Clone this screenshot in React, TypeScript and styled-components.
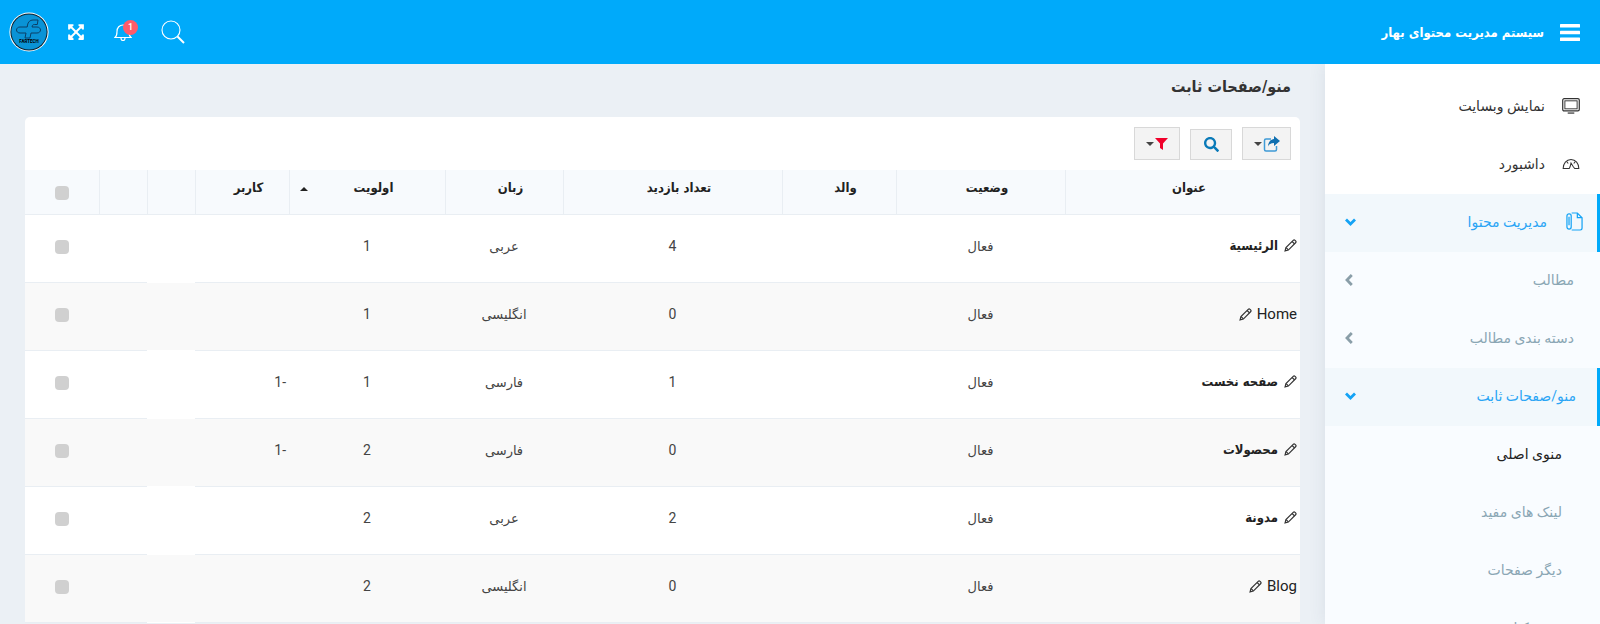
import React from 'react';
import styled, { createGlobalStyle } from 'styled-components';
import { FaExpandArrowsAlt, FaSearch } from 'react-icons/fa';

const boldStack = '"DejaVu Sans Condensed", Roboto, "DejaVu Sans", sans-serif';

const GlobalStyle = createGlobalStyle`
  html, body {
    margin: 0;
    height: 624px;
    overflow: hidden;
    background: #ebf0f5;
    font-family: Roboto, "DejaVu Sans", sans-serif;
  }
`;

const Page = styled.div`
  direction: rtl;
  width: 1600px;
  height: 624px;
  overflow: hidden;
`;

const Header = styled.header`
  height: 64px;
  background: #00aafa;
  display: flex;
  align-items: center;
  color: #fff;
  padding: 0 20px 0 9px;
  box-sizing: border-box;
  position: relative;
  z-index: 1;
`;

const Brand = styled.div`
  display: flex;
  align-items: center;
  gap: 16px;
  font-family: ${boldStack};
  font-size: 13px;
  font-weight: 700;
  flex: 1;
`;

const HeaderTools = styled.div`
  display: flex;
  direction: ltr;
  align-items: center;
`;

const ToolSlot = styled.div<{ $w: number }>`
  width: ${p => p.$w}px;
  display: flex;
  justify-content: center;
  position: relative;
`;

const Badge = styled.span`
  position: absolute;
  top: -2px;
  left: 20px;
  width: 15px;
  height: 15px;
  border-radius: 50%;
  background: #ff5b6a;
  color: #fff;
  font-size: 9px;
  font-weight: 500;
  line-height: 15px;
  text-align: center;
`;

const Body = styled.div`
  display: flex;
  height: 560px;
`;

const Sidebar = styled.aside`
  width: 275px;
  flex: none;
  background: #fff;
  padding-top: 14px;
  overflow: hidden;
  box-shadow: 0 0 16px rgba(60, 80, 110, 0.1);
`;

const NavRow = styled.div<{ $active?: boolean }>`
  height: 58px;
  box-sizing: border-box;
  display: flex;
  align-items: center;
  padding: 0 ${p => (p.$active ? 14 : 17)}px 3px 0;
  gap: ${p => (p.$active ? 19 : 17)}px;
  font-size: 14px;
  color: ${p => (p.$active ? '#2aa5f5' : '#333')};
  background: ${p => (p.$active ? '#f2f8fc' : 'transparent')};
  border-right: 3px solid ${p => (p.$active ? '#00aafa' : 'transparent')};
`;

const SubMenu = styled.div`
  background: #f9fcff;
`;

const SubRow = styled.div<{ $current?: boolean; $indent?: number }>`
  height: 58px;
  box-sizing: border-box;
  display: flex;
  align-items: center;
  padding: 0 ${p => p.$indent ?? 26}px 3px 0;
  font-size: 14px;
  color: ${p => (p.$current ? '#222' : '#8aa6b4')};
`;

const SubOpen = styled(NavRow)`
  padding-right: 21px;
`;

const Arrow = styled.span`
  margin-right: auto;
  margin-left: 20px;
  display: flex;
`;

const Content = styled.main`
  flex: 1;
  padding: 0 25px;
  min-width: 0;
`;

const Title = styled.h1`
  margin: 0;
  height: 53px;
  display: flex;
  align-items: center;
  padding: 0 9px 9px 0;
  box-sizing: border-box;
  font-family: ${boldStack};
  font-size: 16px;
  font-weight: 700;
  color: #333;
`;

const Card = styled.section`
  background: #fff;
  border-radius: 5px 5px 0 0;
`;

const Toolbar = styled.div`
  height: 53px;
  display: flex;
  align-items: flex-start;
  padding: 10px 9px 0 0;
  box-sizing: border-box;
  gap: 10px;
`;

const ToolButton = styled.button<{ $w: number; $h?: number }>`
  width: ${p => p.$w}px;
  height: ${p => p.$h ?? 33}px;
  margin-top: ${p => (p.$h ? 2 : 0)}px;
  padding: 0;
  border: 1px solid #d8d8d8;
  background: #f3f3f3;
  display: flex;
  align-items: center;
  justify-content: center;
  gap: 1px;
`;

const Caret = styled.span`
  width: 0;
  height: 0;
  border-left: 4px solid transparent;
  border-right: 4px solid transparent;
  border-top: 4px solid #444;
`;

const Table = styled.table`
  width: 1275px;
  table-layout: fixed;
  border-collapse: separate;
  border-spacing: 0;
`;

const Th = styled.th`
  height: 45px;
  box-sizing: border-box;
  padding: 0 0 10px 12px;
  background: #f7fafd;
  border-bottom: 1px solid #e9eef3;
  border-left: 1px solid #e9eef3;
  font-family: ${boldStack};
  font-size: 13px;
  font-weight: 700;
  color: #222;
  text-align: center;
  position: relative;
  &:last-child {
    border-left: 0;
    padding: 0;
  }
`;

const Row = styled.tr<{ $alt: boolean }>`
  background: ${p => (p.$alt ? '#f9f9f9' : '#fff')};
`;

const Td = styled.td<{ $blank?: boolean }>`
  height: 68px;
  box-sizing: border-box;
  padding: 0 0 5px;
  border-bottom: 1px solid ${p => (p.$blank ? '#fff' : '#e9eef3')};
  text-align: center;
  font-size: 14px;
  color: #444;
`;

const NameCell = styled(Td)`
  text-align: right;
  padding-right: 3px;
  color: #222;
`;

const NameInner = styled.span<{ $latin: boolean }>`
  display: inline-flex;
  align-items: center;
  flex-direction: ${p => (p.$latin ? 'row-reverse' : 'row')};
  gap: ${p => (p.$latin ? 5 : 6)}px;
  font-family: ${p => (p.$latin ? 'Roboto, sans-serif' : boldStack)};
  font-size: ${p => (p.$latin ? 15 : 13)}px;
  font-weight: ${p => (p.$latin ? 400 : 700)};
`;

const SmallCell = styled(Td)`
  font-size: 13px;
`;

const UserCell = styled(Td)`
  text-align: right;
  padding-right: 3px;
`;

const Check = styled.span`
  display: inline-block;
  width: 14px;
  height: 14px;
  border-radius: 4px;
  background: #d0d0d0;
  vertical-align: middle;
`;

const SortMark = styled.span`
  position: absolute;
  left: 10px;
  top: 17px;
  width: 0;
  height: 0;
  border-left: 4px solid transparent;
  border-right: 4px solid transparent;
  border-bottom: 4px solid #222;
`;

const BarsIcon = () => (
  <svg width="20" height="17" viewBox="0 0 20 17" fill="#fff">
    <rect width="20" height="3.400" rx="0.500" />
    <rect y="6.800" width="20" height="3.400" rx="0.500" />
    <rect y="13.600" width="20" height="3.400" rx="0.500" />
  </svg>
);

const Logo = () => (
  <svg width="40" height="40" viewBox="0 0 40 40">
    <circle cx="20" cy="20" r="19.6" fill="#fff" />
    <circle cx="20" cy="20" r="18.6" fill="#08202f" />
    <circle cx="20" cy="20" r="17.600" fill="#0a93d6" />
    <path
      d="M29 8h-5c-3 0-5 2-5.500 5l-.3 2H11c-2 0-3.500 1.300-3.500 3s1.500 3 3.500 3h6l-1 5h5l1-5h6c2 0 3.500-1.300 3.500-3s-1.500-3-3.500-3h-5l.3-1c.2-1 .8-1.500 2-1.500h3z"
      fill="none"
      stroke="#0a3f66"
      strokeWidth="1"
    />
    <text x="20" y="31" textAnchor="middle" fontSize="4.500" fontWeight="700" fill="#000" fontFamily="Roboto, sans-serif">
      FARTECH
    </text>
  </svg>
);

const BellIcon = () => (
  <svg width="18" height="20" viewBox="0 0 18 20" fill="none" stroke="#fff" strokeWidth="1.200">
    <path d="M1 15.500c1.500-1.200 2-2.500 2-6C3 5.500 5.500 3 9 3s6 2.500 6 6.500c0 3.500.5 4.800 2 6z" />
    <path d="M7 16c0 1.500 1 2.500 2 2.500s2-1 2-2.500" />
  </svg>
);

const ThinSearch = () => (
  <svg width="24" height="24" viewBox="0 0 24 24" fill="none" stroke="#fff">
    <circle cx="10" cy="10" r="9" strokeWidth="1.100" />
    <path d="M16.500 16.500l6.500 6.500" strokeWidth="2" />
  </svg>
);

const MonitorIcon = () => (
  <svg width="18" height="16" viewBox="0 0 19 17" fill="none" stroke="#333">
    <rect x="0.700" y="0.700" width="17.600" height="13" rx="1.500" strokeWidth="1.300" />
    <rect x="3" y="3" width="13" height="8.500" strokeWidth="1" />
    <path d="M6 16h7" strokeWidth="1.300" />
  </svg>
);

const GaugeIcon = () => (
  <svg width="18" height="12" viewBox="0 0 19 13" fill="none" stroke="#333" strokeWidth="1.100">
    <path d="M1 11.500C1 6 4.500 1.500 9.500 1.500S18 6 18 11.500h-4.500L12 9.500l-2.500-4-1 4-1 2z" />
    <path d="M1 11.500h6.500M5 4l1.500 2M14 4l-1.500 2" />
  </svg>
);

const DocIcon = () => (
  <svg width="17" height="19" viewBox="0 0 18 20" fill="none" stroke="#14a3f5" strokeWidth="1.300">
    <path d="M6 1h6l5 5v11c0 1-1 2-2 2H6" />
    <path d="M12 1v5h5" />
    <rect x="1" y="2" width="4.500" height="16" rx="2.200" />
    <path d="M3.200 5v9" />
  </svg>
);

const Pencil = () => (
  <svg width="13" height="13" viewBox="0 0 12 12" fill="none" stroke="#333" strokeWidth="1.100">
    <path d="M1 11l.8-3L8.500 1.300c.5-.5 1.200-.5 1.700 0l.5.5c.5.5.5 1.200 0 1.700L4 10.200z" />
    <path d="M2 8l2 2M7.500 2.300l2.200 2.200" />
  </svg>
);

const ChevronDown = () => (
  <svg width="11" height="8" viewBox="0 0 11 8" fill="none" stroke="#14a3f5" strokeWidth="2.800">
    <path d="M1 1.500l4.500 4.500L10 1.500" />
  </svg>
);

const ChevronLeft = () => (
  <svg width="8" height="12" viewBox="0 0 8 12" fill="none" stroke="#8a9ea8" strokeWidth="2.800">
    <path d="M6.800 1L2 6l4.800 5" />
  </svg>
);

const ShareIcon = () => (
  <svg width="17" height="16" viewBox="0 0 17 16" fill="none">
    <path d="M8 3H3C2 3 1.500 3.500 1.500 4.500v9c0 1 .5 1.500 1.500 1.500h9c1 0 1.500-.5 1.500-1.500V10" stroke="#3f9bd6" strokeWidth="1.500" />
    <path d="M11 0l6 5-6 5V7C8 7 6 8 5 10.500 5 6.500 7.500 3.500 11 3z" fill="#0f6fb0" />
  </svg>
);

const FilterIcon = () => (
  <svg width="13" height="12" viewBox="0 0 13 12" fill="#f0002a">
    <path d="M0 0h13L8 5.500V12L5 10V5.500z" />
  </svg>
);

type PageRow = { name: string; state: string; visits: string; lang: string; order: string; user?: string; latin?: boolean };

const rows: PageRow[] = [
  { name: 'الرئیسیة', state: 'فعال', visits: '4', lang: 'عربی', order: '1' },
  { name: 'Home', state: 'فعال', visits: '0', lang: 'انگلیسی', order: '1', latin: true },
  { name: 'صفحه نخست', state: 'فعال', visits: '1', lang: 'فارسی', order: '1', user: '-1' },
  { name: 'محصولات', state: 'فعال', visits: '0', lang: 'فارسی', order: '2', user: '-1' },
  { name: 'مدونة', state: 'فعال', visits: '2', lang: 'عربی', order: '2' },
  { name: 'Blog', state: 'فعال', visits: '0', lang: 'انگلیسی', order: '2', latin: true },
];

const widths = [235, 169, 114, 219, 118, 156, 94, 48, 48, 74];

export default function App() {
  return (
    <Page>
      <GlobalStyle />
      <Header>
        <Brand>
          <BarsIcon />
          <span>سیستم مدیریت محتوای بهار</span>
        </Brand>
        <HeaderTools>
          <ToolSlot $w={40}><Logo /></ToolSlot>
          <ToolSlot $w={54}><FaExpandArrowsAlt size={18} /></ToolSlot>
          <ToolSlot $w={40}>
            <BellIcon />
            <Badge>1</Badge>
          </ToolSlot>
          <ToolSlot $w={60}><ThinSearch /></ToolSlot>
        </HeaderTools>
      </Header>
      <Body>
        <Sidebar>
          <NavRow><MonitorIcon /><span>نمایش وبسایت</span></NavRow>
          <NavRow><GaugeIcon /><span>داشبورد</span></NavRow>
          <NavRow $active>
            <DocIcon />
            <span>مدیریت محتوا</span>
            <Arrow><ChevronDown /></Arrow>
          </NavRow>
          <SubMenu>
            <SubRow>
              <span>مطالب</span>
              <Arrow><ChevronLeft /></Arrow>
            </SubRow>
            <SubRow>
              <span>دسته بندی مطالب</span>
              <Arrow><ChevronLeft /></Arrow>
            </SubRow>
          </SubMenu>
          <SubOpen $active>
            <span>منو/صفحات ثابت</span>
            <Arrow><ChevronDown /></Arrow>
          </SubOpen>
          <SubMenu>
            <SubRow $current $indent={38}>منوی اصلی</SubRow>
            <SubRow $indent={38}>لینک های مفید</SubRow>
            <SubRow $indent={38}>دیگر صفحات</SubRow>
            <SubRow $indent={38}>منوی کناری</SubRow>
          </SubMenu>
        </Sidebar>
        <Content>
          <Title>منو/صفحات ثابت</Title>
          <Card>
            <Toolbar>
              <ToolButton $w={49}>
                <ShareIcon />
                <Caret />
              </ToolButton>
              <ToolButton $w={42} $h={31}>
                <FaSearch color="#0a7ab8" size={15} />
              </ToolButton>
              <ToolButton $w={46}>
                <FilterIcon />
                <Caret />
              </ToolButton>
            </Toolbar>
            <Table>
              <colgroup>
                {widths.map((w, i) => <col key={i} style={{ width: w }} />)}
              </colgroup>
              <thead>
                <tr>
                  <Th>عنوان</Th>
                  <Th>وضعیت</Th>
                  <Th>والد</Th>
                  <Th>تعداد بازدید</Th>
                  <Th>زبان</Th>
                  <Th>اولویت<SortMark /></Th>
                  <Th>کاربر</Th>
                  <Th />
                  <Th />
                  <Th><Check /></Th>
                </tr>
              </thead>
              <tbody>
                {rows.map((r, i) => (
                  <Row key={r.name} $alt={i % 2 === 1}>
                    <NameCell>
                      <NameInner $latin={!!r.latin}><Pencil />{r.name}</NameInner>
                    </NameCell>
                    <SmallCell>{r.state}</SmallCell>
                    <Td />
                    <Td>{r.visits}</Td>
                    <SmallCell>{r.lang}</SmallCell>
                    <Td>{r.order}</Td>
                    <UserCell>{r.user}</UserCell>
                    <Td $blank />
                    <Td />
                    <Td><Check /></Td>
                  </Row>
                ))}
              </tbody>
            </Table>
          </Card>
        </Content>
      </Body>
    </Page>
  );
}
